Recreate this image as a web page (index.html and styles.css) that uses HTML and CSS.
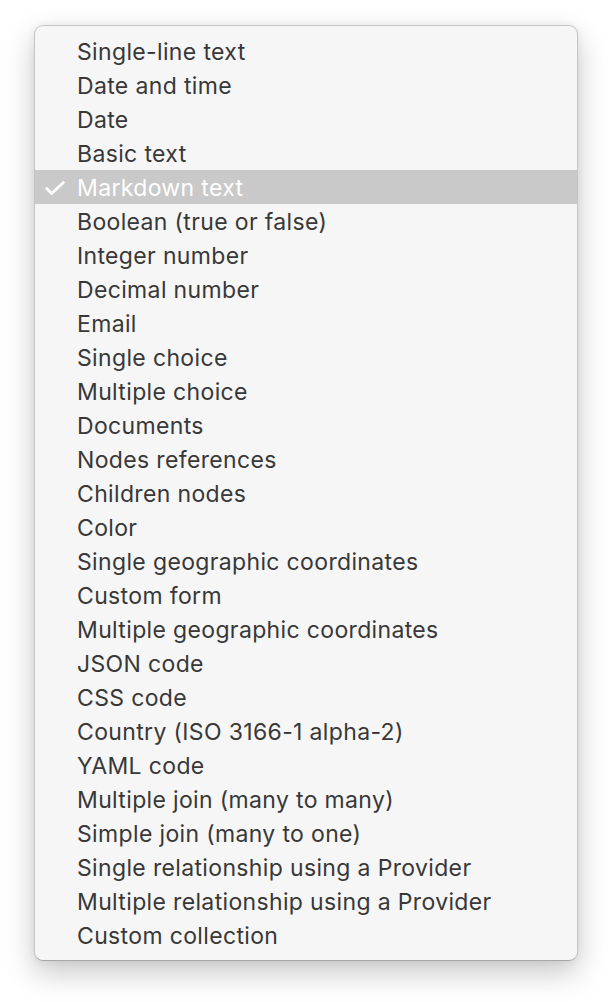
FILE: index.html
```html
<!DOCTYPE html>
<html lang="en">
<head>
    <meta charset="UTF-8">
    <meta name="viewport" content="width=device-width, initial-scale=1.0">
    <title>Field type</title>
    <link rel="stylesheet" href="styles.css">
</head>
<body>
    <div class="menu">
        <div class="menu-item">Single-line text</div>
        <div class="menu-item">Date and time</div>
        <div class="menu-item">Date</div>
        <div class="menu-item">Basic text</div>
        <div class="menu-item selected">
            <svg class="check" viewBox="0 0 20 14" width="20" height="14">
                <path d="M1.8 7.6 L6.6 12.4 L18.4 1.4" fill="none" stroke="#fff" stroke-width="2.8" stroke-linecap="round" stroke-linejoin="round"/>
            </svg>
            Markdown text
        </div>
        <div class="menu-item">Boolean (true or false)</div>
        <div class="menu-item">Integer number</div>
        <div class="menu-item">Decimal number</div>
        <div class="menu-item">Email</div>
        <div class="menu-item">Single choice</div>
        <div class="menu-item">Multiple choice</div>
        <div class="menu-item">Documents</div>
        <div class="menu-item">Nodes references</div>
        <div class="menu-item">Children nodes</div>
        <div class="menu-item">Color</div>
        <div class="menu-item">Single geographic coordinates</div>
        <div class="menu-item">Custom form</div>
        <div class="menu-item">Multiple geographic coordinates</div>
        <div class="menu-item">JSON code</div>
        <div class="menu-item">CSS code</div>
        <div class="menu-item">Country (ISO 3166-1 alpha-2)</div>
        <div class="menu-item">YAML code</div>
        <div class="menu-item">Multiple join (many to many)</div>
        <div class="menu-item">Simple join (many to one)</div>
        <div class="menu-item">Single relationship using a Provider</div>
        <div class="menu-item">Multiple relationship using a Provider</div>
        <div class="menu-item">Custom collection</div>
    </div>
</body>
</html>
```

FILE: styles.css
```css
body {
    margin: 0;
    min-height: 1002px;
    box-sizing: border-box;
    padding: 25px 0 0 34px;
    background-color: #ffffff;
    font-family: "Inter", "Liberation Sans", sans-serif;
}

.menu {
    width: 542px;
    padding: 8px 0;
    background-color: #f6f6f6;
    border: 1px solid #c4c4c4;
    border-bottom-color: #a8a8a8;
    border-radius: 9px;
    box-shadow: 0 12px 30px rgba(0, 0, 0, 0.22), 0 0 8px rgba(0, 0, 0, 0.06);
}

.menu-item {
    position: relative;
    height: 34px;
    line-height: 36px;
    padding-left: 42px;
    font-size: 23px;
    letter-spacing: 0.35px;
    color: #383838;
    white-space: nowrap;
}

.menu-item.selected {
    background-color: #c9c9c9;
    color: #ffffff;
}

.check {
    position: absolute;
    left: 10px;
    top: 11px;
}
```
